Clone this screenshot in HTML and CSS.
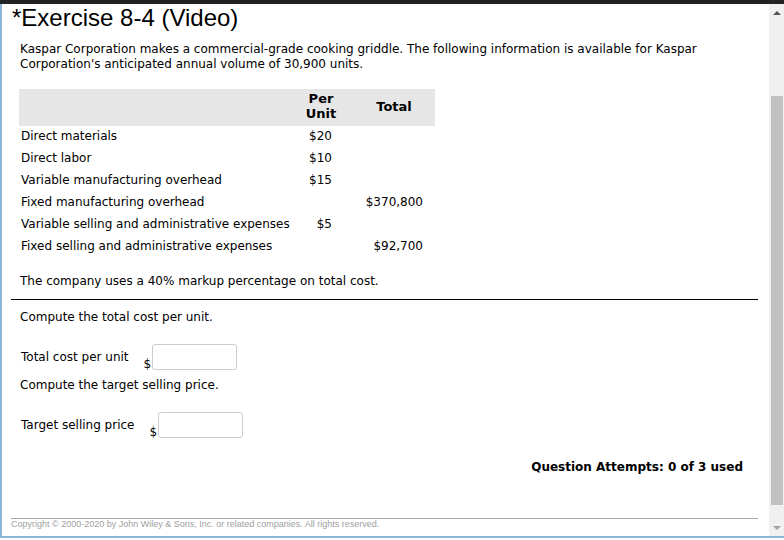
FILE: index.html
```html
<!DOCTYPE html>
<html lang="en">
<head>
    <meta charset="UTF-8">
    <title>Exercise 8-4 (Video)</title>
    <link rel="stylesheet" href="styles.css">
</head>
<body>
    <div class="topbar"></div>
    <div class="window">
        <div class="content">
            <h1>*Exercise 8-4 (Video)</h1>
            <p class="intro">Kaspar Corporation makes a commercial-grade cooking griddle. The following information is available for Kaspar Corporation's anticipated annual volume of 30,900 units.</p>

            <table class="costs">
                <thead>
                    <tr>
                        <th class="label-col"></th>
                        <th class="unit-col">Per<br>Unit</th>
                        <th class="total-col">Total</th>
                    </tr>
                </thead>
                <tbody>
                    <tr><td>Direct materials</td><td class="num">$20</td><td class="num"></td></tr>
                    <tr><td>Direct labor</td><td class="num">$10</td><td class="num"></td></tr>
                    <tr><td>Variable manufacturing overhead</td><td class="num">$15</td><td class="num"></td></tr>
                    <tr><td>Fixed manufacturing overhead</td><td class="num"></td><td class="num">$370,800</td></tr>
                    <tr><td>Variable selling and administrative expenses</td><td class="num">$5</td><td class="num"></td></tr>
                    <tr><td>Fixed selling and administrative expenses</td><td class="num"></td><td class="num">$92,700</td></tr>
                </tbody>
            </table>

            <p class="markup">The company uses a 40% markup percentage on total cost.</p>
            <hr class="divider">

            <p class="question">Compute the total cost per unit.</p>
            <div class="answer-row">
                <label for="totalCost">Total cost per unit</label>
                <span class="currency">$</span>
                <input type="text" id="totalCost">
            </div>

            <p class="question next">Compute the target selling price.</p>
            <div class="answer-row">
                <label for="targetPrice">Target selling price</label>
                <span class="currency">$</span>
                <input type="text" id="targetPrice">
            </div>

            <div class="attempts">Question Attempts: 0 of 3 used</div>

            <div class="footer">Copyright &copy; 2000-2020 by John Wiley &amp; Sons, Inc. or related companies. All rights reserved.</div>
        </div>
        <div class="scrollbar">
            <div class="scroll-btn up"></div>
            <div class="scroll-track"><div class="scroll-thumb"></div></div>
            <div class="scroll-btn down"></div>
        </div>
    </div>
</body>
</html>
```

FILE: styles.css
```css
html, body {
    margin: 0;
    padding: 0;
    background: white;
    overflow: hidden;
}
body {
    font-family: "DejaVu Sans", Verdana, sans-serif;
    font-size: 12px;
    color: #000;
}
.topbar {
    height: 4px;
    background: #222;
}
.window {
    display: flex;
    height: 534px;
    border-left: 2px solid #8db4da;
    border-bottom: 2px solid #8db4da;
    box-sizing: border-box;
}
.content {
    flex: 1;
    padding: 0 11px 0 9px;
    overflow: hidden;
}
h1 {
    margin: 0;
    padding-left: 1px;
    font-family: "Liberation Sans", Arial, sans-serif;
    font-size: 24px;
    font-weight: normal;
    line-height: 28px;
}
.intro {
    margin: 10px 0 0 9px;
    line-height: 15px;
}
.costs {
    margin: 17px 0 0 8px;
    border-collapse: collapse;
}
.costs th {
    background: #e6e6e6;
    font-weight: bold;
    font-size: 13px;
    line-height: 15px;
    padding: 2px 2px 5px;
    text-align: center;
}
.costs th.total-col {
    padding-left: 12px;
}
.costs td {
    padding: 2px 2px 4px;
    line-height: 16px;
    white-space: nowrap;
}
.label-col {
    width: 276px;
}
.unit-col {
    width: 40px;
}
.total-col {
    width: 78px;
}
.costs td.num {
    text-align: right;
}
.costs td.num:nth-child(2) {
    padding-right: 11px;
}
.costs td.num:nth-child(3) {
    padding-right: 12px;
}
.markup {
    margin: 16px 0 0 9px;
    line-height: 15px;
}
.divider {
    margin: 10px 0 0;
    border: 0;
    border-top: 1px solid #000;
}
.question {
    margin: 10px 0 0 9px;
    line-height: 15px;
}
.question.next {
    margin-top: 8px;
}
.answer-row {
    display: flex;
    align-items: flex-start;
    margin: 19px 0 0 10px;
    height: 26px;
}
.answer-row label {
    padding-top: 6px;
    line-height: 15px;
}
.currency {
    font-size: 12px;
    margin: 13px 1px 0 15px;
    line-height: 14px;
}
.answer-row input {
    width: 85px;
    height: 26px;
    box-sizing: border-box;
    border: 1px solid #ccc;
    border-radius: 3px;
    padding: 2px 4px;
    font-family: inherit;
    font-size: 12px;
}
.attempts {
    margin-top: 22px;
    text-align: right;
    font-weight: bold;
    line-height: 15px;
    padding-right: 15px;
}
.footer {
    margin-top: 43px;
    border-top: 1px solid #aaa;
    font-family: "Liberation Sans", Arial, sans-serif;
    font-size: 9px;
    line-height: 11px;
    color: #a0a0a0;
}
.scrollbar {
    width: 15px;
    background: #f0f0f0;
    display: flex;
    flex-direction: column;
}
.scroll-btn {
    height: 17px;
    display: flex;
    align-items: center;
    justify-content: center;
}
.scroll-btn::before {
    content: "";
    border-left: 4px solid transparent;
    border-right: 4px solid transparent;
}
.scroll-btn.up::before {
    border-bottom: 4px solid #505050;
}
.scroll-btn.down::before {
    border-top: 4px solid #a3a3a3;
}
.scroll-track {
    flex: 1;
    padding: 75px 1px 0 2px;
}
.scroll-thumb {
    height: 409px;
    background: #c1c1c1;
}
```
